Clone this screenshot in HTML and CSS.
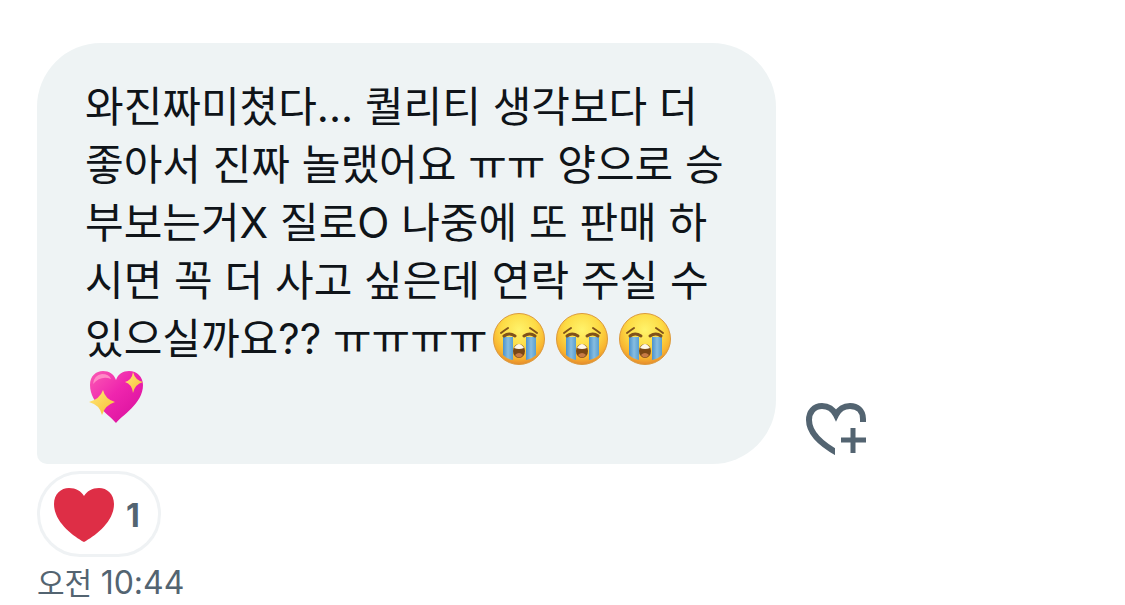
FILE: index.html
```
<!DOCTYPE html>
<html lang="ko">
<head>
  <meta charset="UTF-8" />
  <meta name="viewport" content="width=device-width, initial-scale=1.0"/>
  <title>메시지</title>
  <link rel="stylesheet" href="styles.css">
</head>
<body>
  <!-- shared emoji drawings -->
  <svg class="defs" aria-hidden="true">
    <defs>
      <radialGradient id="face" cx="50%" cy="32%" r="68%">
        <stop offset="0" stop-color="#fff36b"/>
        <stop offset="0.5" stop-color="#fddb45"/>
        <stop offset="0.82" stop-color="#f8b32f"/>
        <stop offset="1" stop-color="#e58a2c"/>
      </radialGradient>
      <linearGradient id="tear" x1="0" y1="0" x2="1" y2="0">
        <stop offset="0" stop-color="#4b92cd"/>
        <stop offset="0.5" stop-color="#87bde0"/>
        <stop offset="1" stop-color="#599fd0"/>
      </linearGradient>
      <linearGradient id="pink" x1="0" y1="0" x2="1" y2="1">
        <stop offset="0" stop-color="#fb5bb4"/>
        <stop offset="0.45" stop-color="#ef25ae"/>
        <stop offset="1" stop-color="#d60d9b"/>
      </linearGradient>
      <linearGradient id="star" x1="0" y1="0" x2="1" y2="1">
        <stop offset="0" stop-color="#ffe979"/>
        <stop offset="1" stop-color="#f7bd35"/>
      </linearGradient>
      <symbol id="sob" viewBox="0 0 54 54">
        <circle cx="27" cy="27" r="25.5" fill="url(#face)" stroke="#dc9a3c"/>
        <path d="M11 25H21V48Q15 47 11 43Z" fill="url(#tear)"/>
        <path d="M34 25H44V43Q40 47 34 48Z" fill="url(#tear)"/>
        <g fill="none" stroke="#80521b" stroke-linecap="round">
          <path d="M9 21Q13 18 16 16M45 21Q41 18 38 16" stroke-width="2"/>
          <path d="M12 24Q17 20 23 24M32 24Q38 20 43 24" stroke-width="3"/>
        </g>
        <ellipse cx="27" cy="39" rx="6" ry="7" fill="#7a4715"/>
        <path d="M22 36Q27 28 32 36Q27 38 22 36Z" fill="#fff8e8"/>
        <path d="M23 43Q27 39 31 43Q27 48 23 43Z" fill="#c77a45"/>
      </symbol>
      <symbol id="sparkle-heart" viewBox="0 0 54 54">
        <path d="M27 53C22 46 1 34 1 15C1 6 7 1 14 1C20 1 25 4 27 10C29 4 34 1 40 1C48 1 54 7 54 15C54 34 32 46 27 53Z" fill="url(#pink)"/>
        <path d="M4 14Q5 5 13 4Q20 4 22 9Q12 5 4 14Z" fill="#ff8ac6"/>
        <path d="M14 20Q16 29 26 32Q16 35 13 45Q11 35 0 32Q11 29 14 20Z" fill="url(#star)"/>
        <path d="M44 2Q46 10 54 12Q46 14 44 23Q43 14 36 12Q43 10 44 2Z" fill="url(#star)"/>
      </symbol>
    </defs>
  </svg>

  <main class="thread">
    <div class="message">
      <p class="bubble">와진짜미쳤다... 퀄리티 생각보다 더 좋아서 진짜 놀랬어요 ㅠㅠ 양으로 승부보는거X 질로O 나중에 또 판매 하시면 꼭 더 사고 싶은데 연락 주실 수 있으실까요?? ㅠㅠㅠㅠ<svg class="emoji" role="img" aria-label="크게 우는 얼굴"><use href="#sob"/></svg><svg class="emoji" role="img" aria-label="크게 우는 얼굴"><use href="#sob"/></svg><svg class="emoji" role="img" aria-label="크게 우는 얼굴"><use href="#sob"/></svg><svg class="emoji" role="img" aria-label="반짝이는 하트"><use href="#sparkle-heart"/></svg></p>
      <button type="button" class="react" aria-label="반응 추가">
        <svg viewBox="0 0 62 54" aria-hidden="true">
          <clipPath id="cut"><path d="M0 0H62V20H30V54H0Z"/></clipPath>
          <path clip-path="url(#cut)" d="M58 26V17C58 8 52 4 45 4C39 4 34 7 31 13C28 7 23 4 17 4C9 4 4 10 4 18C4 31 15 42 36 53" fill="none" stroke="#536471" stroke-width="6"/>
          <path d="M48 26V51M36 38H61" stroke="#536471" stroke-width="5"/>
        </svg>
      </button>
    </div>
    <button type="button" class="reaction">
      <svg viewBox="0 0 60 54" aria-hidden="true">
        <path d="M30 54C19 48 0 34 0 16C0 6 7 0 15 0C22 0 27 3 30 8C33 3 38 0 45 0C53 0 60 6 60 16C60 34 41 48 30 54Z" fill="#de2e46"/>
      </svg>
      <span>1</span>
    </button>
    <time class="time" datetime="10:44">오전 <span class="clock">10:44</span></time>
  </main>
</body>
</html>
```

FILE: styles.css
```
body {
  margin: 0;
  background-color: #fff;
  color: #0f1419;
  font-family: Inter, "Noto Sans CJK KR", sans-serif;
}
.defs {
  position: absolute;
  width: 0;
  height: 0;
}
.thread {
  padding: 43px 37px 0;
}
.message {
  display: flex;
  align-items: flex-end;
  gap: 29px;
}
.bubble {
  box-sizing: border-box;
  max-width: 739px;
  margin: 0;
  padding: 35px 48px 38px;
  border-radius: 64px 64px 64px 10px;
  background-color: #eef3f4;
  font-size: 42px;
  line-height: 58px;
}
.emoji {
  width: 54px;
  height: 54px;
  margin: -8px 5px -8px 4px;
  vertical-align: -4px;
}
button {
  border: none;
  padding: 0;
  background: none;
  font-family: inherit;
  color: #536471;
  cursor: pointer;
}
.react {
  flex: none;
  margin-bottom: 8px;
}
.react svg {
  display: block;
  width: 62px;
  height: 54px;
}
.reaction {
  display: flex;
  align-items: center;
  gap: 12px;
  height: 86px;
  margin-top: 7px;
  padding: 2px 18px 0 14px;
  border: 3px solid #eff2f4;
  border-radius: 43px;
  font-size: 32px;
  font-weight: 700;
}
.reaction svg {
  width: 60px;
  height: 54px;
}
.time {
  display: block;
  margin-top: 4px;
  color: #536471;
  font-size: 30px;
  line-height: 44px;
}
.clock {
  font-size: 32px;
}
```
